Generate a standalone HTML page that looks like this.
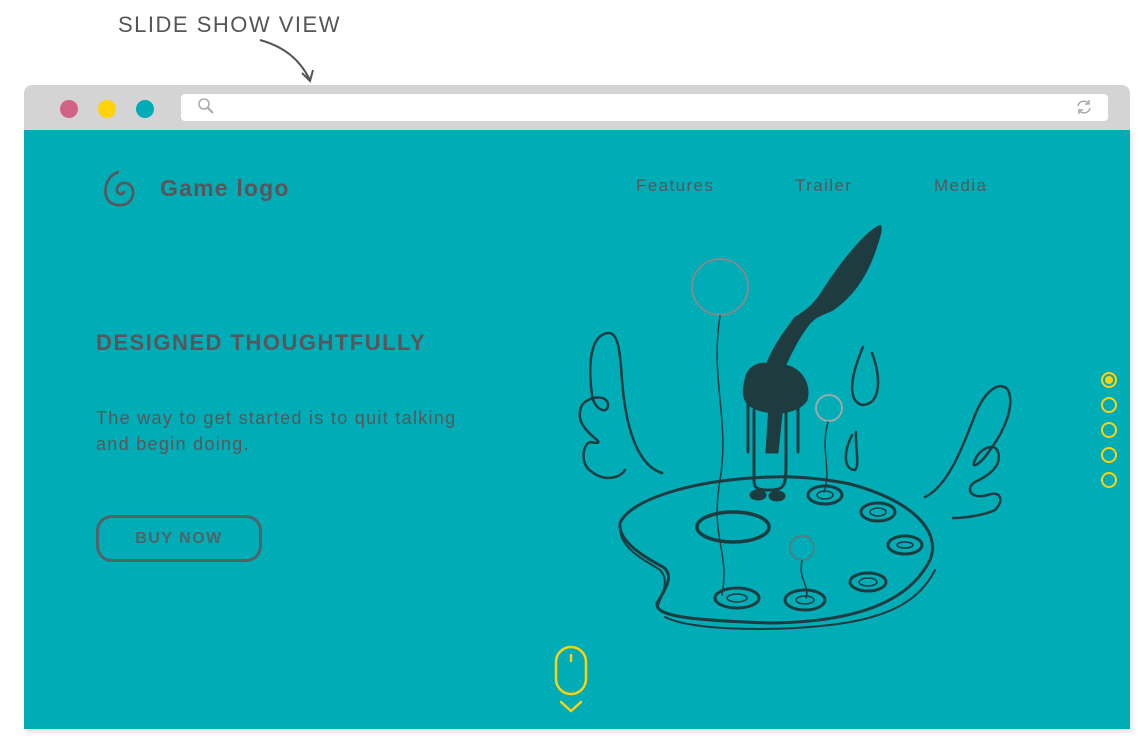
<!DOCTYPE html>
<html><head><meta charset="utf-8"><style>
*{margin:0;padding:0;box-sizing:border-box}
body{width:1142px;height:747px;background:#fff;position:relative;overflow:hidden;font-family:"Liberation Sans",sans-serif}
.abs{position:absolute}
.bar{left:24px;top:85px;width:1106px;height:45px;background:#d4d4d4;border-radius:8px 8px 0 0}
.dot{width:18px;height:18px;border-radius:50%;top:100px}
.url{left:181px;top:94px;width:927px;height:27px;background:#fff;border-radius:4px}
.main{left:24px;top:130px;width:1106px;height:599px;background:#00acb6;box-shadow:2px 3px 4px rgba(0,0,0,.12)}
.t{color:#5b5559}
.nav{top:176px;font-size:17px;letter-spacing:1.4px}
.pg{left:1101px;width:16px;height:16px;border:2px solid #ffd20a;border-radius:50%}
</style></head><body>
<div class="abs t" style="left:118px;top:12px;font-size:22px;letter-spacing:1.5px;color:#555">SLIDE SHOW VIEW</div>
<svg class="abs" style="left:250px;top:35px" width="70" height="50"><path d="M10 5 C35 12 50 25 60 45" stroke="#555" stroke-width="2" fill="none"/><path d="M52 38 L60 46 L63 35" stroke="#555" stroke-width="2" fill="none"/></svg>
<div class="abs bar"></div>
<div class="abs dot" style="left:60px;background:#d36386"></div>
<div class="abs dot" style="left:98px;background:#ffd20a"></div>
<div class="abs dot" style="left:136px;background:#00acb6"></div>
<div class="abs url"></div>
<svg class="abs" style="left:197px;top:97px" width="20" height="20"><circle cx="7" cy="7" r="5" stroke="#aaa" stroke-width="1.6" fill="none"/><path d="M11 11 L16 16" stroke="#aaa" stroke-width="2"/></svg>
<svg class="abs" style="left:1074px;top:97px" width="20" height="20"><path d="M4 9 A6 6 0 0 1 15 7 M16 11 A6 6 0 0 1 5 13" stroke="#aaa" stroke-width="1.5" fill="none"/><path d="M15 3 V7 H11 M5 17 V13 H9" stroke="#aaa" stroke-width="1.5" fill="none"/></svg>
<div class="abs main"></div>
<svg class="abs" style="left:102px;top:170px" width="36" height="40"><path d="M16 2 C6 6 2 16 4 26 C6 34 16 37 24 34 C32 30 33 20 28 15 C23 11 16 13 15 19 C14 24 20 26 22 22" stroke="#5b5559" stroke-width="2.6" fill="none" stroke-linecap="round"/></svg>
<div class="abs t" style="left:160px;top:175px;font-size:23px;font-weight:bold;letter-spacing:1.2px">Game logo</div>
<div class="abs t nav" style="left:636px">Features</div>
<div class="abs t nav" style="left:795px">Trailer</div>
<div class="abs t nav" style="left:934px">Media</div>
<div class="abs t" style="left:96px;top:330px;font-size:22px;font-weight:bold;letter-spacing:1.5px">DESIGNED THOUGHTFULLY</div>
<div class="abs t" style="left:96px;top:405px;font-size:18px;line-height:26px;letter-spacing:1.3px">The way to get started is to quit talking<br>and begin doing.</div>
<div class="abs t" style="left:96px;top:515px;width:166px;height:47px;border:3px solid #4f6468;border-radius:16px;text-align:center;line-height:41px;font-size:16px;font-weight:bold;letter-spacing:1.5px;color:#4f6468">BUY NOW</div>
<svg class="abs" style="left:570px;top:220px" width="460" height="420" fill="none" stroke="#1e3c40" stroke-width="3" stroke-linecap="round">
<path d="M200 257 C120 260 60 280 50 303 C48 320 70 335 93 347 C105 355 95 370 87 383 C85 395 110 400 200 403 C290 402 340 380 360 340 C372 310 340 280 280 264 C250 258 225 256 200 257 Z"/>
<path d="M50 310 C52 330 75 340 90 350 C100 360 92 375 88 385 M95 397 C120 410 200 412 260 405 C320 398 350 380 365 350" stroke-width="2"/>
<ellipse cx="163" cy="307" rx="36" ry="15" stroke-width="3.5"/>
<ellipse cx="167" cy="378" rx="22" ry="10"/><ellipse cx="167" cy="378" rx="10" ry="4" stroke-width="1.5"/>
<ellipse cx="235" cy="380" rx="20" ry="10"/><ellipse cx="235" cy="380" rx="9" ry="4" stroke-width="1.5"/>
<ellipse cx="255" cy="275" rx="17" ry="9"/><ellipse cx="255" cy="275" rx="8" ry="4" stroke-width="1.5"/>
<ellipse cx="308" cy="292" rx="17" ry="9"/><ellipse cx="308" cy="292" rx="8" ry="4" stroke-width="1.5"/>
<ellipse cx="335" cy="325" rx="17" ry="9"/><ellipse cx="335" cy="325" rx="8" ry="3" stroke-width="1.5"/>
<ellipse cx="298" cy="362" rx="18" ry="9"/><ellipse cx="298" cy="362" rx="9" ry="4" stroke-width="1.5"/>
<path d="M92 253 C65 245 55 200 52 160 C50 130 48 112 38 113 C20 115 18 145 22 175 C24 190 38 195 38 185 C38 175 20 175 12 185 C5 200 15 210 27 220 C32 225 22 222 20 222 C12 225 10 245 22 252 C35 262 50 258 55 250" stroke-width="2.5"/>
<path d="M355 277 C380 265 395 220 405 195 C415 170 430 160 438 170 C445 185 435 210 420 230 C410 245 400 250 405 240 C410 228 425 222 428 232 C432 245 420 255 405 262 C395 268 400 280 418 275 C430 270 435 280 425 290 C415 295 395 298 383 298" stroke-width="2.5"/>
<path d="M293 127 C283 150 275 180 292 185 C310 185 312 160 302 133 M282 215 C272 235 275 250 285 250 C290 245 285 228 286 212" stroke-width="2.5"/>
<circle cx="150" cy="67" r="28" stroke="#7d8c8e" stroke-width="2"/>
<path d="M150 96 C140 160 160 200 150 260 C140 320 160 330 152 375" stroke-width="1.5"/>
<circle cx="259" cy="188" r="13" stroke="#9aaaaa" stroke-width="2"/>
<path d="M258 202 C250 230 262 250 254 272" stroke-width="1.5"/>
<circle cx="232" cy="328" r="12" stroke="#5f7578" stroke-width="1.5"/>
<path d="M232 341 C228 360 240 365 236 378" stroke-width="1.5"/>
<path d="M178 185 V232 M228 185 V232 M184 190 V260 C184 268 186 270 200 270 C214 270 216 266 216 245 V190" stroke-width="3"/>
<ellipse cx="188" cy="275" rx="7" ry="4" fill="#1e3c40"/><ellipse cx="207" cy="276" rx="7" ry="4" fill="#1e3c40"/>
<path d="M212 152 C222 130 228 118 238 105 C244 97 250 95 262 90 C280 78 295 60 305 30 C310 15 312 8 310 6 C300 10 280 30 255 68 C245 85 235 92 225 98 C215 112 202 128 195 150 Z" fill="#1e3c40" stroke-width="2"/>
<path d="M176 160 C178 145 195 140 205 148 C220 140 242 158 236 180 C226 195 195 195 180 185 C172 178 174 168 176 160 Z" fill="#1e3c40"/>
<path d="M200 185 L197 232 L207 232 L212 185 Z" fill="#1e3c40"/>
</svg>
<div class="abs pg" style="top:372px"><div style="width:8px;height:8px;margin:2px;border-radius:50%;background:#ffd20a"></div></div>
<div class="abs pg" style="top:397px"></div>
<div class="abs pg" style="top:422px"></div>
<div class="abs pg" style="top:447px"></div>
<div class="abs pg" style="top:472px"></div>
<svg class="abs" style="left:553px;top:645px" width="36" height="70" fill="none" stroke="#ffd20a" stroke-width="2.5" stroke-linecap="round"><rect x="3" y="2" width="30" height="47" rx="15"/><path d="M18 10 V16"/><path d="M8 57 L18 66 L28 57"/></svg>
</body></html>
